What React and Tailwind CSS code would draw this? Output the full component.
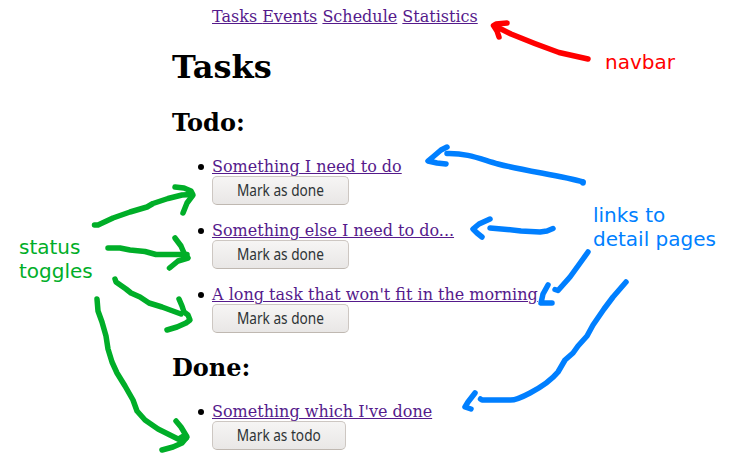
const todo = [
  "Something I need to do",
  "Something else I need to do...",
  "A long task that won't fit in the morning",
];
const done = ["Something which I've done"];

const link = "text-[#551a8b] underline decoration-1";

function Task({ title, action, width }) {
  return (
    <li className="flex h-12">
      <span className="ml-[26px] mr-2 mt-[7px] size-[6px] shrink-0 rounded-full bg-black" />
      <div>
        <a href="#" className={`block h-[19px] w-max whitespace-nowrap ${link}`}>{title}</a>
        <button
          className={`flex h-[29px] items-center justify-center rounded-[5px] border border-[#cdc7c2] border-b-[#bfb8b1] bg-linear-to-b from-[#f6f5f4] to-[#e9e7e6] font-['Noto_Sans',sans-serif] text-[15.5px] leading-[19px] text-[#2e3436] ${width}`}
        >
          <span className="block scale-x-[0.88] whitespace-nowrap">{action}</span>
        </button>
      </div>
    </li>
  );
}

function Arrows() {
  return (
    <svg
      className="pointer-events-none absolute left-0 top-0"
      width="746"
      height="464"
      viewBox="0 0 746 464"
      fill="none"
      strokeWidth="5.5"
      strokeLinecap="round"
      strokeLinejoin="round"
    >
      <g stroke="#ff0000">
        <path d="M588 59L559 52.500Q535 44 511 34L499 28" />
        <path d="M507 23L496 24L493.500 25.500L497 31L499 37" />
      </g>
      <g stroke="#00ae28">
        <path d="M94.500 225H98L113 218L130 212L147 207L153 203.500L168 198.500L182 195L192 194.500" />
        <path d="M175 187L184 188L191 191L193 195L187 203L183 213" />
        <path d="M108 248H120L130 250L145 251.500L156 254.500H187" />
        <path d="M175 238L181 246L184 253L188 258L178 261L169.500 268" />
        <path d="M115 279L116 282L126 289L131 293L140 297L149 303L162 307L181 314" />
        <path d="M179 299L182 306L184 312L188 315L190 320L186 323L177 327L167 330" />
        <path d="M97 299L98 311L102 322L106 336L108 349L112 362L117 373L125 386L133 400L137 411L145 420L158 429L170 435L178 439L186 438" />
        <path d="M176 421L181 427L187 437L182 443L173 447L162 450" />
        <path d="M180 439L185 436" strokeWidth="7" />
      </g>
      <g stroke="#007fff">
        <path d="M447 153.500C468 153 480 159 498 164C525 171 563 176 583 182" />
        <path d="M583 182V183" />
        <path d="M447 147L441 150L434 156L428 161L437 163L446 164" />
        <path d="M490 228L507 229.500L521 231L540 232L547 231L553 228.500" />
        <path d="M490 219L479 224L473 229L477 233L482 237" />
        <path d="M588 252L583 259L570 277L558 290.500L555 289.500" />
        <path d="M548 285L543 294L541 303H552" />
        <path d="M626 282L613 297L604 309L593 325L587 336L578 346L573 353L565 360L558 372Q549 383 530 393Q515 401 509 400H482L480.500 399" />
        <path d="M475 393L468 402L465 407L471 409" />
      </g>
    </svg>
  );
}

const note = "absolute whitespace-pre font-['DejaVu_Sans',sans-serif] text-[20px] leading-6";

export default function App() {
  return (
    <div className="relative h-[464px] w-[746px] overflow-hidden bg-white font-['DejaVu_Serif',serif] text-[16px] leading-[19px] text-black">
      <main className="ml-[172px] w-[400px] pt-[7px]">
        <nav className="ml-10 flex h-[19px] whitespace-pre">
          <a href="#" className={link}>Tasks </a>
          <a href="#" className={link}>Events</a>
          <span> </span>
          <a href="#" className={link}>Schedule</a>
          <span> </span>
          <a href="#" className={link}>Statistics</a>
        </nav>
        <h1 className="mt-[23px] text-[32px] font-bold leading-[37px]">Tasks</h1>
        <h2 className="mt-[23px] text-[24px] font-bold leading-7">Todo:</h2>
        <ul className="mt-5 flex flex-col gap-4">
          {todo.map((title) => (
            <Task key={title} title={title} action="Mark as done" width="w-[137px]" />
          ))}
        </ul>
        <h2 className="mt-[21px] text-[24px] font-bold leading-7">Done:</h2>
        <ul className="mt-5">
          {done.map((title) => (
            <Task key={title} title={title} action="Mark as todo" width="w-[134px]" />
          ))}
        </ul>
      </main>
      <Arrows />
      <div className={`${note} left-[605px] top-[50px] text-[#ff0000]`}>navbar</div>
      <div className={`${note} left-[593px] top-[203px] text-[#007fff]`}>{"links to\ndetail pages"}</div>
      <div className={`${note} left-[19px] top-[235px] text-[#00ae28]`}>{"status\ntoggles"}</div>
    </div>
  );
}
